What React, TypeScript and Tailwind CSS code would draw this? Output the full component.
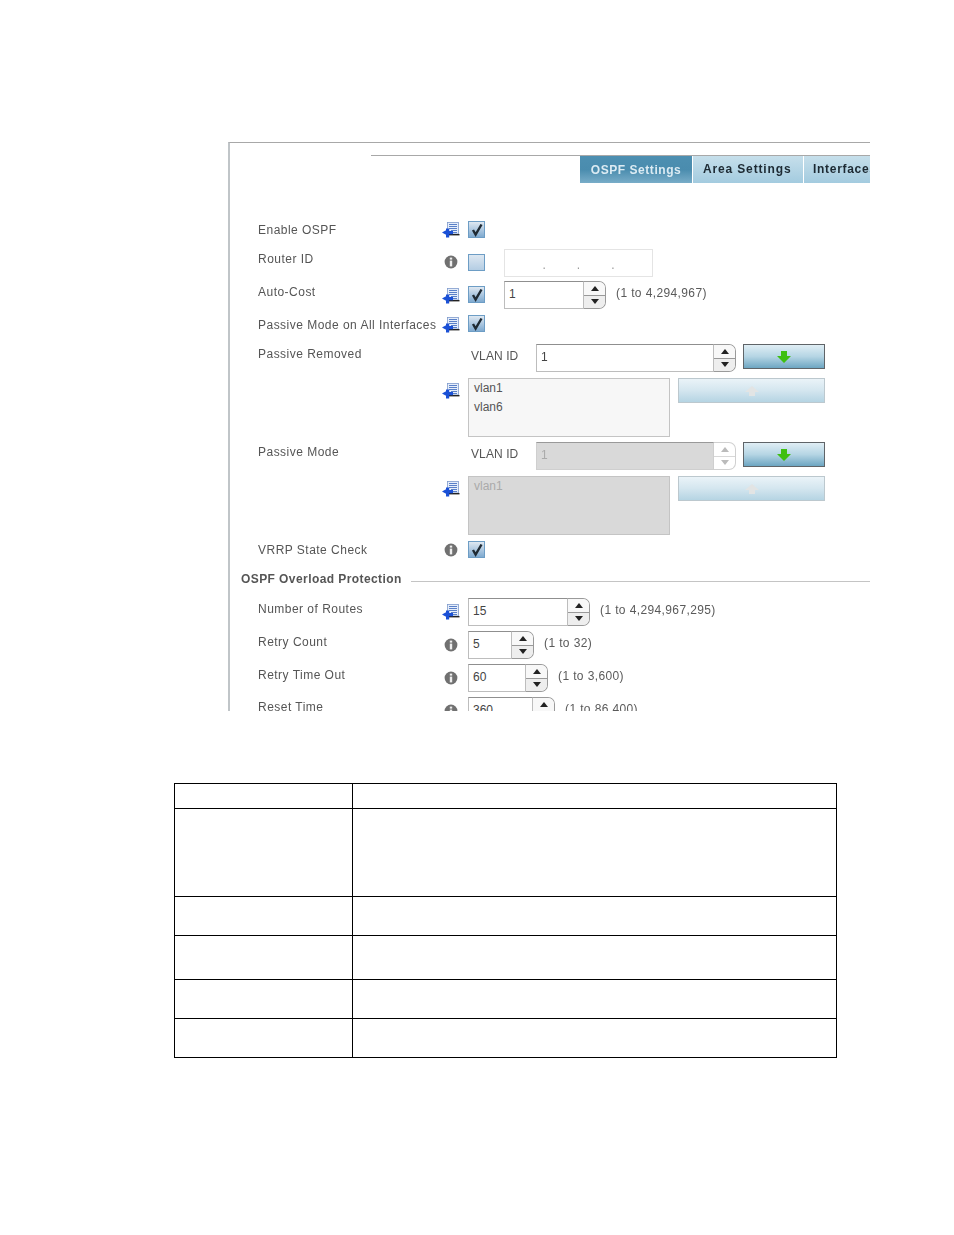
import React from "react";

const Pin = ({ top = 0 }: { top?: number }) => (
  <svg width="18" height="16" viewBox="0 0 18 16" className="block" style={{ marginTop: top }}>
    <rect x="5.5" y="0.5" width="11" height="11.5" fill="#e6eefa" stroke="#7f9bcc" strokeWidth="0.8" />
    <path d="M7 2.5h8M7 4.5h8M7 6.5h8M9 8.5h6M11 10.5h4" stroke="#5a80c8" strokeWidth="1" />
    <path d="M7 12.7h10.5" stroke="#222" strokeWidth="1.4" />
    <path d="M0 10.5L3.5 8.5H4V6.5h3.2V9H11v3.2H7.2V15.5H4V12.5H3.5z" fill="#1a50d6" />
  </svg>
);

const Info = ({ top = 0 }: { top?: number }) => (
  <svg width="14" height="14" viewBox="0 0 14 14" className="block ml-[2px]" style={{ marginTop: top }}>
    <circle cx="7" cy="7" r="6.4" fill="#707070" />
    <rect x="5.8" y="2.6" width="2.4" height="2" fill="#eee" />
    <rect x="5.8" y="5.6" width="2.4" height="5.8" fill="#eee" />
  </svg>
);

const Check = ({ on = true, top = 0 }: { on?: boolean; top?: number }) => (
  <div
    className={`w-[17px] h-[17px] border border-[#6d9dc5] bg-gradient-to-b flex items-center justify-center ${on ? "from-[#dfe8f1] to-[#7faad0]" : "from-[#dde7f1] to-[#b4cde3]"}`}
    style={{ marginTop: top }}
  >
    {on && (
      <svg width="14" height="14" viewBox="0 0 14 14">
        <path d="M3 7l2.6 4.5L11.5 1.5" fill="none" stroke="#1f2a33" strokeWidth="2.4" />
      </svg>
    )}
  </div>
);

const Spin = ({ off = false }: { off?: boolean }) => (
  <div className={`w-[22px] h-full border border-l-0 rounded-r-[7px] flex flex-col overflow-hidden ${off ? "border-[#d0d0d0]" : "border-[#9a9a9a]"}`}>
    <div className={`flex-1 flex items-center justify-center border-b ${off ? "border-[#d8d8d8]" : "border-[#999] bg-[#f8f8f8]"}`}>
      <div className={`w-0 h-0 border-x-[4px] border-x-transparent border-b-[5px] ${off ? "border-b-[#bbb]" : "border-b-[#222]"}`} />
    </div>
    <div className={`flex-1 flex items-center justify-center ${off ? "" : "bg-[#eeeeee]"}`}>
      <div className={`w-0 h-0 border-x-[4px] border-x-transparent border-t-[5px] ${off ? "border-t-[#bbb]" : "border-t-[#222]"}`} />
    </div>
  </div>
);

const Num = ({ w, v, off = false }: { w: string; v: string; off?: boolean }) => (
  <div className="flex h-[28px]">
    <div className={`${w} h-full border flex items-center pl-[4px] pb-[3px] text-[12px] ${off ? "bg-[#d9d9d9] border-[#cfcfcf] border-t-[#999] text-[#aaa]" : "bg-white border-[#bdbdbd] border-t-[#8f8f8f] text-[#444]"}`}>
      {v}
    </div>
    <Spin off={off} />
  </div>
);

const Range = ({ t, top = 0 }: { t: string; top?: number }) => (
  <span className="text-[12px] text-[#5a5a5a] ml-[10px] tracking-[0.38px] whitespace-nowrap" style={{ marginTop: top }}>{t}</span>
);

const Row = ({
  h,
  label,
  labelTop = 0,
  iconTop = 0,
  icon,
  children,
}: {
  h: string;
  label?: string;
  labelTop?: number;
  iconTop?: number;
  icon?: "pin" | "info";
  children?: React.ReactNode;
}) => (
  <div className={`flex ${h} pl-[28px]`}>
    <div className="w-[184px] text-[12px] leading-[16px] text-[#555] tracking-[0.48px] whitespace-nowrap" style={{ marginTop: labelTop }}>
      {label}
    </div>
    <div className="w-[26px]">
      {icon === "pin" && <Pin top={iconTop} />}
      {icon === "info" && <Info top={iconTop} />}
    </div>
    <div className="flex items-start flex-1">{children}</div>
  </div>
);

const Vlan = ({ off = false }: { off?: boolean }) => (
  <>
    <span className="w-[68px] pl-[3px] mt-[4px] text-[12px] leading-[16px] text-[#555] tracking-[0.1px]">VLAN ID</span>
    <Num w="w-[178px]" v="1" off={off} />
    <button className="ml-[7px] w-[82px] h-[25px] border border-[#5f6468] bg-gradient-to-b from-[#e0eef5] via-[#b5d5e4] to-[#6da6c2] flex items-center justify-center">
      <svg width="14" height="12" viewBox="0 0 14 12">
        <path d="M4 0h6v5h4l-7 7-7-7h4z" fill="#3fbf12" />
      </svg>
    </button>
  </>
);

const ListBox = ({ items, off = false }: { items: string[]; off?: boolean }) => (
  <>
    <div className={`w-[202px] h-[59px] border pl-[5px] text-[12px] leading-[19px] ${off ? "bg-[#d9d9d9] border-[#c4c4c4] text-[#aaa]" : "bg-[#f7f7f7] border-[#c4c4c4] text-[#555]"}`}>
      {items.map((i) => (
        <div key={i}>{i}</div>
      ))}
    </div>
    <button className="ml-[8px] w-[147px] h-[25px] border border-[#bcc8ce] bg-gradient-to-b from-[#eaf3f8] via-[#d4e6ef] to-[#b5d4e3] flex items-center justify-center">
      <svg width="14" height="10" viewBox="0 0 14 10">
        <path d="M7 0l7 6h-4v4H4V6H0z" fill="#e2e4e4" />
      </svg>
    </button>
  </>
);

export default function App() {
  const rows = [25, 88, 39, 44, 39, 39];
  return (
    <div className="w-[954px] h-[1235px] bg-white overflow-hidden font-['Liberation_Sans',Arial,sans-serif]">
      <div className="ml-[228px] pt-[142px]">
        <div className="w-[642px] h-[569px] overflow-hidden border-l-2 border-t border-l-[#c0c5c8] border-t-[#a8a8a8] blur-[0.35px]">
          <div className="ml-[141px] mt-[12px] border-t border-[#a8a8a8]" />
          <div className="flex pl-[350px] h-[27px] text-[12px] font-bold">
            <div className="w-[112px] shrink-0 flex items-center justify-center tracking-[0.55px] text-[#dcebf3] bg-gradient-to-b from-[#4d8fb1] via-[#4a8cae] to-[#78adc8]">OSPF Settings</div>
            <div className="w-[110px] ml-[1px] shrink-0 flex items-center pl-[10px] pb-[2px] tracking-[0.85px] text-[#1d2a33] bg-gradient-to-b from-[#c6dfeb] to-[#a3cbdf]">Area Settings</div>
            <div className="w-[110px] ml-[1px] shrink-0 pl-[9px] pb-[2px] flex items-center tracking-[0.7px] text-[#1d2a33] whitespace-nowrap bg-gradient-to-b from-[#c6dfeb] to-[#a3cbdf]">Interfaces</div>
          </div>
          <div className="h-[38px]" />
          <Row h="h-[28px]" label="Enable OSPF" labelTop={1} icon="pin" iconTop={1}>
            <Check />
          </Row>
          <Row h="h-[32px]" label="Router ID" labelTop={2} icon="info" iconTop={6}>
            <Check on={false} top={5} />
            <div className="ml-[19px] w-[149px] h-[28px] border border-[#e4e4e4] flex justify-around px-[22px] pt-[6px] text-[12px] text-[#999]">
              <span>.</span><span>.</span><span>.</span>
            </div>
          </Row>
          <Row h="h-[34px]" label="Auto-Cost" labelTop={3} icon="pin" iconTop={7}>
            <Check top={5} />
            <div className="ml-[19px]"><Num w="w-[80px]" v="1" /></div>
            <Range t="(1 to 4,294,967)" top={3} />
          </Row>
          <Row h="h-[29px]" label="Passive Mode on All Interfaces" labelTop={2} icon="pin" iconTop={2}>
            <Check />
          </Row>
          <Row h="h-[34px]" label="Passive Removed" labelTop={2}>
            <Vlan />
          </Row>
          <Row h="h-[64px]" icon="pin" iconTop={5}>
            <ListBox items={["vlan1", "vlan6"]} />
          </Row>
          <Row h="h-[34px]" label="Passive Mode" labelTop={2}>
            <Vlan off />
          </Row>
          <Row h="h-[64px]" icon="pin" iconTop={5}>
            <ListBox items={["vlan1"]} off />
          </Row>
          <Row h="h-[30px]" label="VRRP State Check" labelTop={2} icon="info" iconTop={3}>
            <Check top={1} />
          </Row>
          <div className="flex items-start h-[28px] pl-[11px]">
            <span className="text-[12px] leading-[16px] mt-[1px] font-bold text-[#555] tracking-[0.42px] whitespace-nowrap">OSPF Overload Protection</span>
            <div className="flex-1 ml-[9px] mt-[11px] border-t border-[#c4c4c4]" />
          </div>
          <Row h="h-[33px]" label="Number of Routes" labelTop={3} icon="pin" iconTop={6}>
            <Num w="w-[100px]" v="15" />
            <Range t="(1 to 4,294,967,295)" top={3} />
          </Row>
          <Row h="h-[33px]" label="Retry Count" labelTop={3} icon="info" iconTop={7}>
            <Num w="w-[44px]" v="5" />
            <Range t="(1 to 32)" top={3} />
          </Row>
          <Row h="h-[33px]" label="Retry Time Out" labelTop={3} icon="info" iconTop={7}>
            <Num w="w-[58px]" v="60" />
            <Range t="(1 to 3,600)" top={3} />
          </Row>
          <Row h="h-[33px]" label="Reset Time" labelTop={2} icon="info" iconTop={7}>
            <Num w="w-[65px]" v="360" />
            <Range t="(1 to 86,400)" top={3} />
          </Row>
        </div>
      </div>
      <table className="ml-[174px] mt-[72px] w-[663px] table-fixed border-collapse">
        <colgroup>
          <col className="w-[178px]" />
          <col />
        </colgroup>
        <tbody>
          {rows.map((h, i) => (
            <tr key={i} style={{ height: h }}>
              <td className="border border-black" />
              <td className="border border-black" />
            </tr>
          ))}
        </tbody>
      </table>
    </div>
  );
}
